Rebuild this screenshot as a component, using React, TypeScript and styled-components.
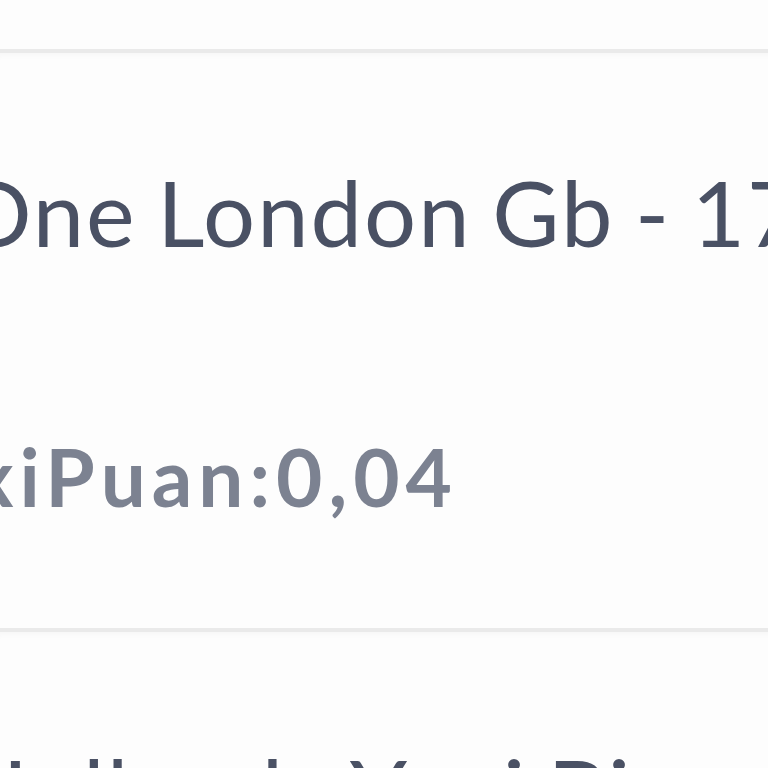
import styled, { createGlobalStyle } from "styled-components";

const GlobalStyle = createGlobalStyle`
  html, body {
    margin: 0;
    padding: 0;
    background: #fdfdfd;
    overflow: hidden;
  }
  body {
    font-family: Lato, "Noto Sans", sans-serif;
  }
`;

type Item = {
  title: string;
  subtitle?: string;
};

const items: Item[] = [
  { title: "One London Gb - 17", subtitle: "TaxiPuan:0,04" },
  { title: "Hollanda Yeni Bina", subtitle: "TaxiPuan:0,02" },
];

function App() {
  return (
    <Viewport>
      <GlobalStyle />
      <List>
        {items.map((item) => (
          <Row key={item.title}>
            <Title>{item.title}</Title>
            {item.subtitle && <Subtitle>{item.subtitle}</Subtitle>}
          </Row>
        ))}
      </List>
    </Viewport>
  );
}

const Viewport = styled.div`
  width: 768px;
  height: 768px;
  overflow: hidden;
  padding-top: 49px;
  box-sizing: border-box;
`;

const List = styled.div`
  display: flex;
  flex-direction: column;
  width: 1400px;
`;

const Row = styled.div`
  display: flex;
  flex-direction: column;
  align-items: flex-start;
  padding: 113px 0 112px;
  gap: 178px;
  border-top: 4px solid #eaeaea;
  box-shadow: inset 0 6px 6px -4px rgba(0, 0, 0, 0.03);
`;

const Title = styled.div`
  margin-left: -42px;
  font-size: 92px;
  font-weight: 400;
  line-height: 1;
  letter-spacing: 2px;
  word-spacing: -5px;
  color: #4a5164;
  white-space: nowrap;
`;

const Subtitle = styled.div`
  margin-left: -120px;
  font-size: 80px;
  font-weight: 700;
  line-height: 1;
  letter-spacing: 6px;
  color: #7c8291;
  white-space: nowrap;
`;

export default App;
